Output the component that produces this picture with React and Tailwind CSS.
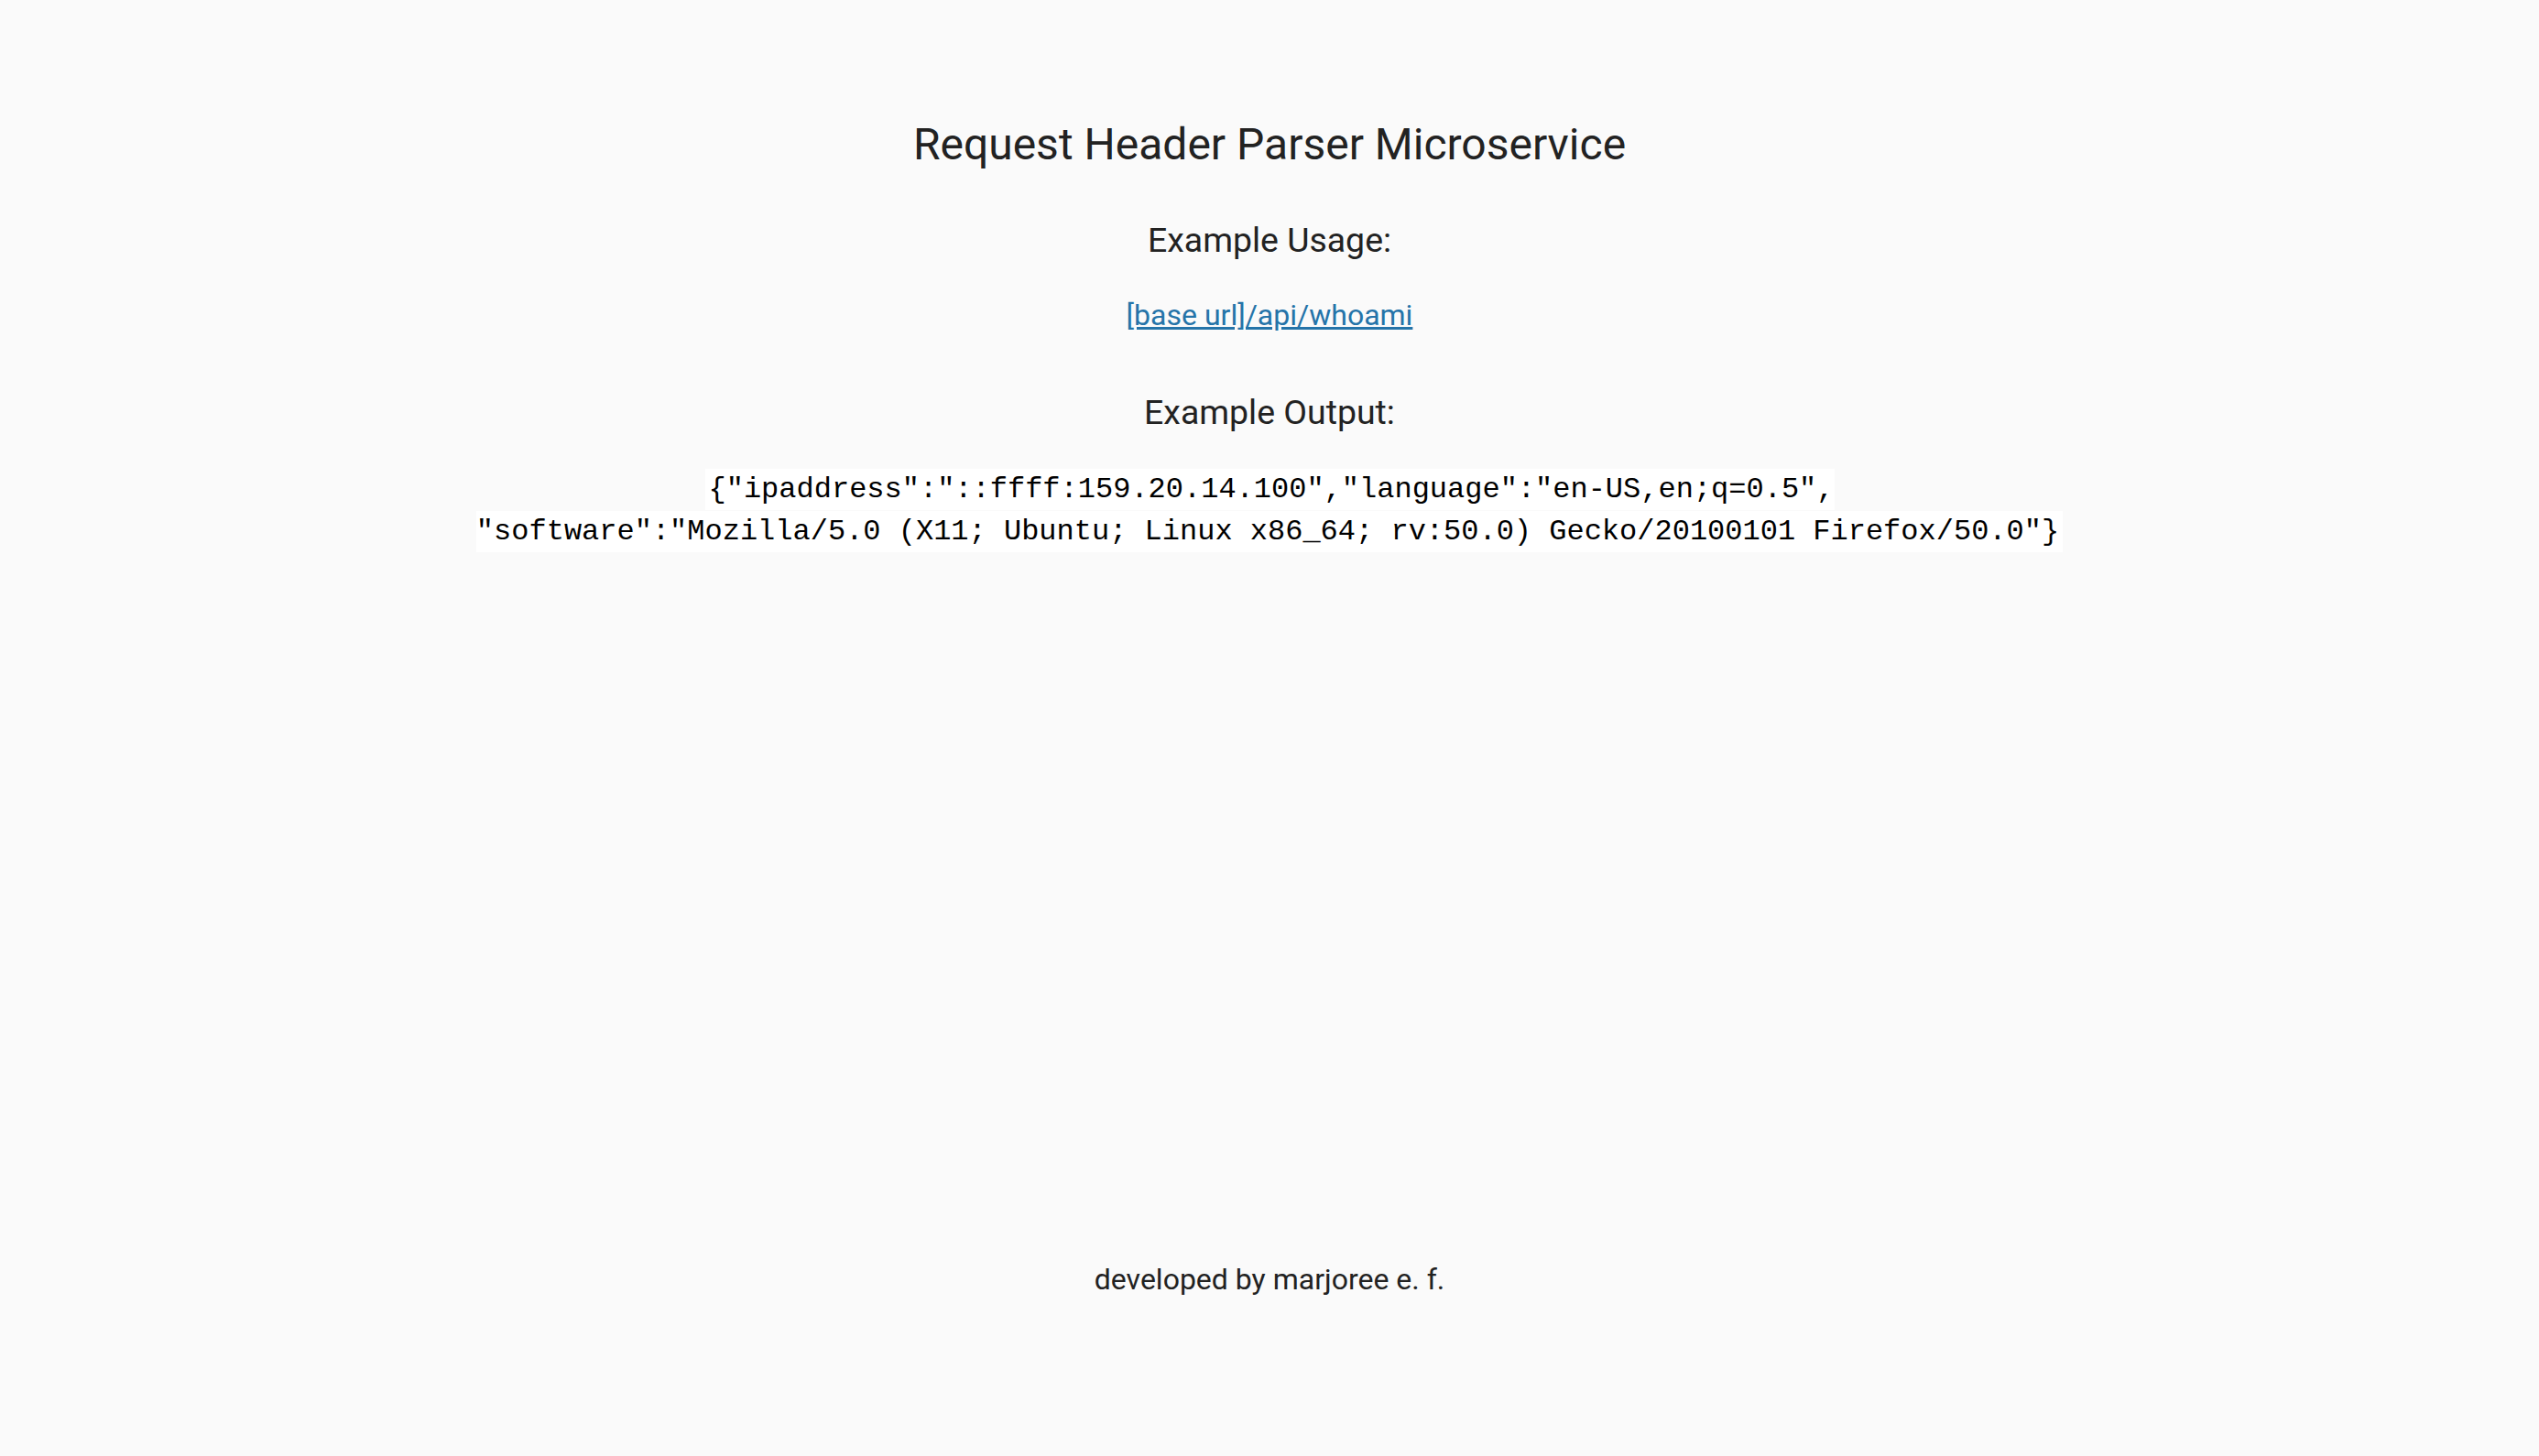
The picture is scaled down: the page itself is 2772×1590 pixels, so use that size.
export default function App() {
  return (
    <div className="min-h-[1590px] bg-[#fafafa] text-[#222] text-center font-['Roboto',sans-serif] flex flex-col">
      <div className="pt-[135px]">
        <h2 className="text-[48px] leading-[45px] font-normal">Request Header Parser Microservice</h2>
        <h3 className="mt-[60px] text-[37.44px] leading-[45px] font-normal">Example Usage:</h3>
        <p className="mt-[37px] text-[32px] leading-[45px]">
          <a href="api/whoami" className="text-[#2574a9] underline">[base url]/api/whoami</a>
        </p>
        <h3 className="mt-[61px] text-[37.44px] leading-[45px] font-normal">Example Output:</h3>
        <p className="mt-[39px] font-['Liberation_Mono',monospace] text-[32px] leading-[46px]">
          <code className="font-['Liberation_Mono',monospace] text-black bg-white p-[4px]">
            {'{"ipaddress":"::ffff:159.20.14.100","language":"en-US,en;q=0.5",'}
            <br />
            {'"software":"Mozilla/5.0 (X11; Ubuntu; Linux x86_64; rv:50.0) Gecko/20100101 Firefox/50.0"}'}
          </code>
        </p>
      </div>
      <footer className="mt-[771px] text-[32px] leading-[45px]">
        <p>developed by marjoree e. f.</p>
      </footer>
    </div>
  );
}
